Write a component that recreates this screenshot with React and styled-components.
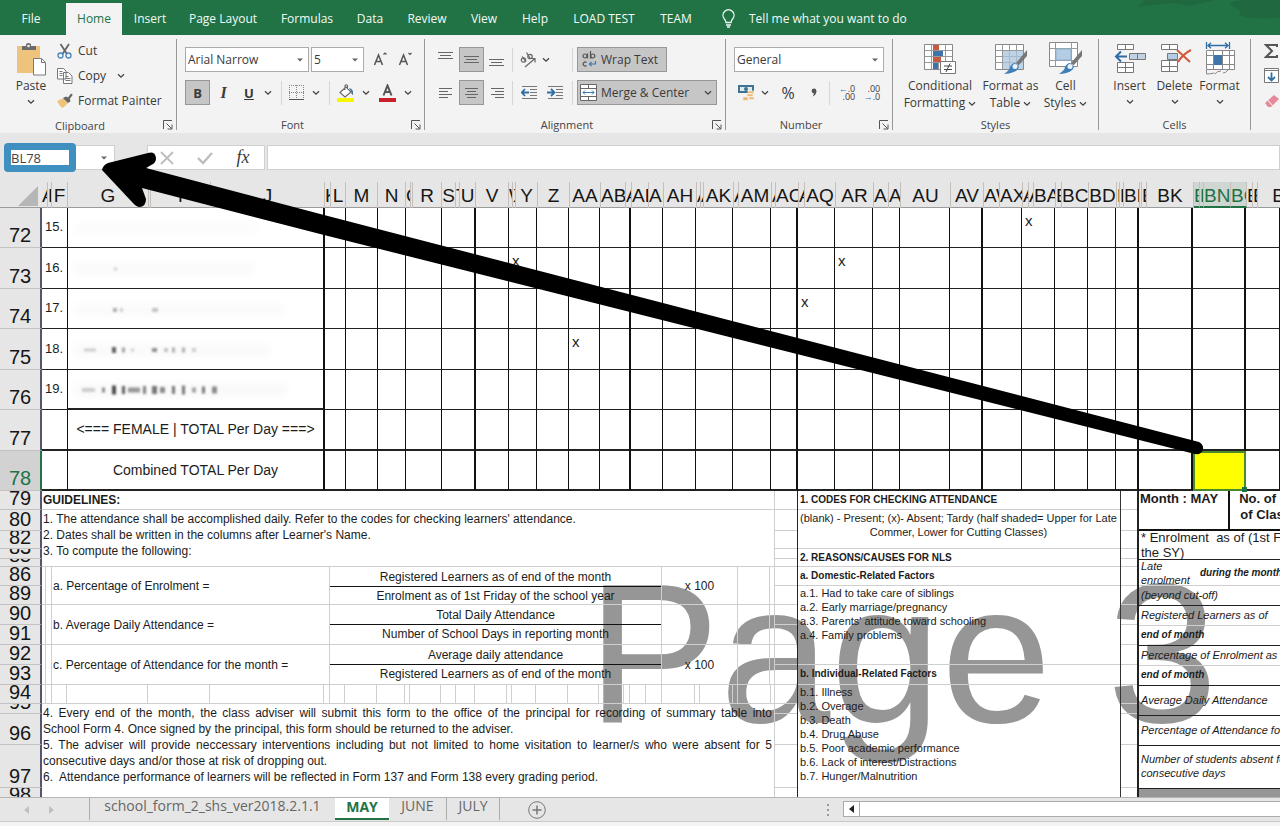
import React from "react";
import styled, { createGlobalStyle, css } from "styled-components";

const UI = '"Open Sans", "Noto Sans", sans-serif';
const SHEET = '"Liberation Sans", Arial, sans-serif';
const GREEN = "#217346";
const GRID = "#cfcfcf";

const Global = createGlobalStyle`
  * { box-sizing: border-box; }
  body { margin: 0; font-family: ${UI}; font-size: 12px; color: #3a3a3a; background: #f3f3f3; }
  button, select, input { font: inherit; color: inherit; }
  p { margin: 0; }
`;

const Page = styled.div`
  position: relative;
  min-height: 100vh;
  width: 100%;
  overflow: hidden;
  display: flex;
  flex-direction: column;
`;

/* ---------- Tab bar ---------- */
const TabBar = styled.nav`
  position: relative;
  display: flex;
  align-items: flex-end;
  height: 35px;
  background: ${GREEN};
`;
const TabButton = styled.button`
  flex: none;
  width: ${(p) => p.$w}px;
  height: 32px;
  margin-right: ${(p) => p.$gap || 0}px;
  padding: 0 0 2px;
  border: 0;
  white-space: nowrap;
  background: ${(p) => (p.$on ? "#f3f3f3" : "transparent")};
  color: ${(p) => (p.$on ? GREEN : "#f4faf6")};
`;
const TellMe = styled.button`
  display: flex;
  align-items: center;
  gap: 13px;
  height: 32px;
  padding: 0 0 2px 15px;
  border: 0;
  white-space: nowrap;
  background: transparent;
  color: #f4faf6;
`;
const Swirl = styled.svg`
  position: absolute;
  top: 0;
  right: 0;
`;

/* ---------- Ribbon ---------- */
const Ribbon = styled.div`
  display: flex;
  height: 98px;
  background: #f3f3f3;
`;
const GroupBox = styled.section`
  display: flex;
  flex-direction: column;
  flex: ${(p) => (p.$w ? "none" : "1 0 30px")};
  width: ${(p) => (p.$w ? p.$w + "px" : "auto")};
  overflow: hidden;
  border-right: ${(p) => (p.$w ? "1px" : "0")} solid #979797;
  border-image: linear-gradient(transparent 5%, #979797 5%, #979797 96%, transparent 96%) 1;
`;
const GroupBody = styled.div`
  flex: 1;
  display: flex;
  flex-direction: ${(p) => (p.$col ? "column" : "row")};
  gap: ${(p) => p.$gap || 0}px;
  padding: ${(p) => p.$pad || "0"};
`;
const GroupLabel = styled.div`
  display: flex;
  align-items: center;
  height: 17px;
  font-size: 11px;
  color: #444;
  span { flex: 1; text-align: center; }
`;
const Launcher = styled.button`
  width: 16px;
  height: 14px;
  padding: 0;
  border: 0;
  background: transparent;
  svg { display: block; margin: 1px auto; }
`;
const BigButton = styled.button`
  display: flex;
  flex-direction: column;
  align-items: center;
  width: ${(p) => p.$w}px;
  height: 74px;
  margin-top: ${(p) => p.$top || 0}px;
  padding: 0;
  border: 0;
  background: transparent;
  line-height: 17px;
  white-space: nowrap;
  > svg { flex: none; margin-bottom: 1px; }
  > svg:last-child { margin-top: 5px; }
`;
const SmallStack = styled.div`
  display: flex;
  flex-direction: column;
  align-items: flex-start;
`;
const SmallButton = styled.button`
  display: flex;
  align-items: center;
  gap: 5px;
  height: 25px;
  padding: 0;
  border: 0;
  background: transparent;
  white-space: nowrap;
`;
const ToolRow = styled.div`
  display: flex;
  align-items: center;
  height: 25px;
`;
const Tool = styled.button`
  flex: none;
  display: flex;
  align-items: center;
  justify-content: center;
  width: ${(p) => p.$w}px;
  height: 100%;
  padding: 0;
  border: 1px solid ${(p) => (p.$on ? "#979797" : "transparent")};
  background: ${(p) => (p.$on ? "#c6c6c6" : "transparent")};
  font-size: ${(p) => p.$fs || 12}px;
  font-weight: ${(p) => (p.$bold ? 700 : 400)};
  font-style: ${(p) => (p.$italic ? "italic" : "normal")};
  text-decoration: ${(p) => (p.$under ? "underline" : "none")};
  font-family: ${(p) => (p.$serif ? '"Liberation Serif", serif' : UI)};
`;
const WideTool = styled(Tool)`
  justify-content: flex-start;
  gap: 4px;
  padding-left: ${(p) => p.$pl || 4}px;
  white-space: nowrap;
`;
const Rule = styled.span`
  flex: none;
  width: 1px;
  height: 24px;
  margin: ${(p) => p.$m};
  background: #d6d6d6;
`;
const Combo = styled.label`
  position: relative;
  flex: none;
  display: flex;
  align-items: center;
  width: ${(p) => p.$w}px;
  height: 25px;
  margin-right: ${(p) => p.$mr || 0}px;
  border: 1px solid #ababab;
  background: #fff;
  select {
    appearance: none;
    width: 100%;
    height: 100%;
    padding: 0 2px;
    border: 0;
    background: transparent;
  }
  svg { position: absolute; right: 5px; pointer-events: none; }
`;

/* ---------- Formula bar ---------- */
const FormulaBar = styled.div`
  display: flex;
  height: 49px;
  padding: 12px 0;
  background: #e6e6e6;
`;
const NameBox = styled.label`
  position: relative;
  display: flex;
  align-items: center;
  width: 111px;
  margin-left: 4px;
  margin-right: 32px;
  border: 1px solid #cfcfcf;
  background: #fff;
  > svg { position: absolute; right: 7px; }
`;
const NameInput = styled.input`
  position: absolute;
  left: -1px;
  top: -3px;
  width: 72px;
  height: 29px;
  border: 7px solid #3f90c0;
  border-radius: 4px;
  padding: 0;
  background: #fff;
  font-size: 13px;
  color: #444;
`;
const FxButtons = styled.div`
  display: flex;
  align-items: center;
  width: 118px;
  margin-right: 2px;
  border: 1px solid #cfcfcf;
  background: #fff;
`;
const FormulaInput = styled.input`
  flex: 1;
  min-width: 0;
  border: 1px solid #cfcfcf;
  background: #fff;
`;

/* ---------- Sheet ---------- */
const Sheet = styled.main`
  position: relative;
  isolation: isolate;
  background: #fff;
  font-family: ${SHEET};
  color: #1c1c1c;
  overflow: hidden;
`;
const ColumnHeads = styled.div`
  display: flex;
  height: 26px;
  background: #e6e6e6;
  border-bottom: 1px solid #9b9b9b;
  color: #161616;
`;
const Corner = styled.div`
  flex: none;
  width: 42px;
  padding: 4px 0 0 18px;
`;
const ColumnHead = styled.div`
  flex: ${(p) => (p.$w ? "none" : "1 0 56px")};
  width: ${(p) => (p.$w ? p.$w + "px" : "auto")};
  height: 26px;
  overflow: hidden;
  border-right: 1px solid #c4bfba;
  text-align: center;
  white-space: nowrap;
  font-size: 19px;
  line-height: 27px;
  ${(p) =>
    p.$on &&
    css`
      background: #d0d6d2;
      color: ${GREEN};
      border-bottom: 2px solid ${GREEN};
    `}
`;
const rowHead = css`
  background: ${(p) => (p.$on ? "#d2d2d2" : "#e6e6e6")};
  color: ${(p) => (p.$on ? GREEN : "#161616")};
  border-right: 2px solid ${(p) => (p.$on ? GREEN : "#55566e")};
  border-bottom: 1px solid #c2c2c2;
  font-size: 20px;
  font-weight: 400;
  line-height: 22px;
`;
const Attendance = styled.table`
  width: 100%;
  table-layout: fixed;
  border-spacing: 0;
`;
const RowTh = styled.th`
  ${rowHead}
  padding: 0 0 1px;
  vertical-align: bottom;
  text-align: center;
`;
const Cell = styled.td`
  height: ${(p) => p.$h}px;
  padding: ${(p) => (p.$mark ? "4px 0 0 3px" : "0")};
  vertical-align: ${(p) => (p.$mark ? "top" : "middle")};
  text-align: ${(p) => (p.$center ? "center" : "left")};
  font-size: ${(p) => (p.$mark ? 15 : 14)}px;
  line-height: 17px;
  white-space: nowrap;
  border-right: ${(p) => (p.$thick ? 2 : 1)}px solid #111;
  border-bottom: ${(p) => (p.$heavy ? 2 : 1)}px solid #222;
`;
const NoCell = styled(Cell)`
  font-size: 13px;
  padding: 0 0 2px 3px;
`;
const NameCell = styled(Cell)`
  > svg { display: block; }
`;
const ActiveCell = styled(Cell)`
  position: relative;
  background: #ff0;
  border: 2px solid #4b8a2a;
  &::after {
    content: "";
    position: absolute;
    right: -3px;
    bottom: -3px;
    width: 5px;
    height: 5px;
    background: ${GREEN};
  }
`;

const Lower = styled.div`
  position: relative;
  display: flex;
  height: 306px;
  overflow: hidden;
`;
const Watermark = styled.div`
  position: absolute;
  z-index: -1;
  left: 587px;
  top: 52px;
  font-size: 199px;
  line-height: 220px;
  white-space: nowrap;
  color: #969696;
`;
const RowHeads = styled.div`
  flex: none;
  width: 42px;
`;
const RowHead = styled.div`
  ${rowHead}
  display: flex;
  align-items: flex-end;
  justify-content: center;
  height: ${(p) => p.$h}px;
  overflow: hidden;
`;
const Guidelines = styled.section`
  flex: none;
  width: 733px;
  border-right: 1px solid ${GRID};
  font-size: 12px;
  line-height: 16px;
`;
const Band = styled.div`
  display: flex;
  height: ${(p) => p.$h}px;
  border-bottom: 1px solid ${GRID};
`;
const Lines = styled.div`
  width: 100%;
  padding: ${(p) => p.$pad || "1px 2px 0 1px"};
  text-align: ${(p) => p.$align || "left"};
  font-weight: ${(p) => (p.$bold ? 700 : 400)};
`;
const FullLine = styled.span`
  display: block;
  text-align-last: justify;
`;
const Nub = styled.span`
  flex: none;
  width: ${(p) => p.$w}px;
  border-right: 1px solid ${GRID};
`;
const FormulaName = styled.div`
  display: flex;
  align-items: center;
  width: 278px;
  padding-left: 1px;
  border-right: 1px solid ${GRID};
`;
const Fraction = styled.div`
  width: 332px;
  text-align: center;
  border-right: 1px solid ${GRID};
  p:first-child { height: 20px; padding-top: 2px; border-bottom: 1px solid #111; }
  p:last-child { padding-top: 1px; }
`;
const Times = styled.div`
  display: flex;
  align-items: center;
  justify-content: center;
  width: 76px;
  border-right: 1px solid ${GRID};
`;
const Strip = styled.div`
  flex: none;
  width: ${(p) => p.$w}px;
  border-right: ${(p) => p.$b}px solid #222;
`;
const Codes = styled.section`
  flex: none;
  width: 323px;
  border-right: 1px solid #333;
  font-size: 11px;
  line-height: 14px;
  white-space: nowrap;
`;
const CodeTitle = styled.div`
  width: 100%;
  padding: 2px 0 0 2px;
  font-size: 10px;
  font-weight: 700;
`;
const Summary = styled.section`
  flex: 1 0 142px;
  overflow: hidden;
  font-size: 11px;
  line-height: 14px;
  font-style: italic;
  white-space: nowrap;
`;
const MonthRow = styled.div`
  display: flex;
  height: 40px;
  border-bottom: 2px solid #111;
  font-size: 13px;
  font-weight: 700;
  font-style: normal;
  line-height: 16px;
`;
const MonthCell = styled.div`
  flex: none;
  width: ${(p) => p.$w}px;
  padding: 0 1px;
  text-align: ${(p) => p.$align || "left"};
  border-right: 2px solid #111;
`;
const SumRow = styled.div`
  display: flex;
  flex-direction: column;
  justify-content: center;
  height: ${(p) => p.$h}px;
  padding: 0 0 2px 2px;
  border-bottom: 1px solid ${(p) => (p.$soft ? GRID : "#222")};
  font-size: ${(p) => (p.$bold ? 10 : 11)}px;
  font-weight: ${(p) => (p.$bold ? 700 : 400)};
`;
const Enrolment = styled(SumRow)`
  padding-bottom: 0;
  font-size: 13px;
  font-style: normal;
  line-height: 15px;
`;
const LateRow = styled(SumRow)`
  flex-direction: row;
  justify-content: flex-start;
  align-items: center;
  gap: 10px;
  padding-bottom: 0;
  b { font-size: 10px; }
`;
const Filled = styled.div`
  height: 20px;
  background: #969696;
`;

/* ---------- Sheet tabs ---------- */
const SheetBar = styled.footer`
  display: flex;
  height: 25px;
  padding-left: 15px;
  background: #e6e6e6;
  border-top: 1px solid #b5b5b5;
  border-bottom: 1px solid #c9c9c9;
  font-size: 14px;
  color: #666;
`;
const SheetTab = styled.button`
  flex: none;
  width: ${(p) => p.$w}px;
  height: 22px;
  padding: 0 0 ${(p) => (p.$on ? 4 : 7)}px;
  border: 0;
  border-right: ${(p) => (p.$sep ? 1 : 0)}px solid #ababab;
  background: ${(p) => (p.$on ? "#fff" : "transparent")};
  color: ${(p) => (p.$on ? GREEN : "inherit")};
  font-weight: ${(p) => (p.$on ? 700 : 400)};
  border-bottom: ${(p) => (p.$on ? 2 : 0)}px solid ${GREEN};
  line-height: 15px;
`;
const IconButton = styled.button`
  flex: none;
  display: flex;
  align-items: center;
  justify-content: center;
  width: ${(p) => p.$w}px;
  padding: 0;
  border: 0;
  background: transparent;
  color: inherit;
`;
const Splitter = styled.div`
  flex: none;
  display: flex;
  align-items: center;
  justify-content: flex-end;
  width: 257px;
`;
const Scroller = styled.div`
  flex: 1;
  display: flex;
  height: 16px;
  margin: 3px 0 0 12px;
  border: 1px solid #ababab;
  border-right: 0;
  background: #fff;
`;
const ScrollArrow = styled(IconButton)`
  border-right: 1px solid #ababab;
`;
const Spacer = styled.span`
  flex: 1;
`;
const Annotation = styled.svg`
  position: absolute;
  left: 0;
  top: 0;
  pointer-events: none;
`;

/* ---------- Icons ---------- */
const Caret = () => (
  <svg width="8" height="6" viewBox="0 0 8 6" fill="none" stroke="#444" strokeWidth="1.3"><path d="M1 1.2 4 4.2 7 1.2" /></svg>
);
const Drop = () => (
  <svg width="6" height="4" viewBox="0 0 6 4"><path d="M0 .5h6L3 3.6z" fill="#666" /></svg>
);
const LaunchIcon = () => (
  <svg width="10" height="10" viewBox="0 0 10 10" fill="none" stroke="#555"><path d="M.5 9V.5H9M3.5 3.5l5 5M9 4.5V9H4.5" /></svg>
);
const PasteIcon = () => (
  <svg width="32" height="33" viewBox="0 0 32 33">
    <path d="M2 3h23v27H2z" fill="#eec47c" />
    <path d="M7 3h4V1.5Q11 0 13.500 0T16 1.500V3h5v4H7z" fill="#6b6b6b" /><circle cx="13.500" cy="3" r="1.300" fill="#f3f3f3" />
    <path d="M18.500 15.500h8l4 4v12.500h-12z" fill="#fff" stroke="#7a7a7a" /><path d="M26.500 15.500v4h4" fill="none" stroke="#7a7a7a" />
  </svg>
);
const CutIcon = () => (
  <svg width="16" height="16" viewBox="0 0 16 16" fill="none"><path d="M3.500 1 10 11M12 1 5.500 11" stroke="#666" strokeWidth="1.800" /><circle cx="3.500" cy="12.500" r="2.500" stroke="#4a84b8" strokeWidth="1.300" /><circle cx="11.500" cy="12.500" r="2.500" stroke="#4a84b8" strokeWidth="1.300" /></svg>
);
const CopyIcon = () => (
  <svg width="16" height="16" viewBox="0 0 16 16" fill="#fff" stroke="#777"><path d="M.5.5h6l2.500 2.500v8h-8.500zM6.500 4.500h5l3.500 3.500v7.500H6.500z" /><path d="M2.500 3.500h3M2.500 5.500h3M2.500 7.500h3M8.500 8.500h3M8.500 10.500h5M8.500 12.500h5" /></svg>
);
const PainterIcon = () => (
  <svg width="16" height="16" viewBox="0 0 16 16"><path d="M0 8l7-3 4 5-5 5q-3-1-6-7z" fill="#eec47c" /><path d="M6 5l3-1.500 2 1 3-4 1.800 1.300-3 4 .7 2.500L11 10z" fill="#666" /></svg>
);
const FontSizeIcon = ({ down }) => (
  <svg width="16" height="16" viewBox="0 0 16 16" fill="none" stroke="#555" strokeWidth="1.500"><path d="M1.500 13 5.500 3 9.500 13M3 9.500h5" /><path d={down ? "M10.500 1l1.500 1.500L13.500 1" : "M10.500 2.500 12 1l1.500 1.500"} strokeWidth="1.200" /></svg>
);
const BordersIcon = () => (
  <svg width="16" height="16" viewBox="0 0 16 16" fill="none" stroke="#888" strokeDasharray="1 1"><path d="M.5 0v15M7.500 0v15M14.500 0v15M0 .5h15M0 7.500h15" /><path d="M0 14.500h15" stroke="#555" strokeDasharray="none" /></svg>
);
const FillIcon = () => (
  <svg width="18" height="18" viewBox="0 0 18 18" fill="none"><path d="M3 8.500 9 3l5 5-6 5zM8 6V1.500q1-1.500 2.500 0V5" stroke="#666" fill="#fff" strokeWidth="1.100" /><path d="M12 4q5 1 4 7-2-1-2-4z" fill="#4a6f92" /><path d="M0 14h17v4H0z" fill="#f6f600" /></svg>
);
const FontColorIcon = () => (
  <svg width="18" height="18" viewBox="0 0 18 18" fill="none"><path d="M4.500 11.500 8.500 1.500 12.500 11.500M6 8h5" stroke="#555" strokeWidth="2" /><path d="M0 14h17v4H0z" fill="#c8202a" /></svg>
);
const LinesIcon = ({ rows }) => (
  <svg width="16" height="16" viewBox="0 0 16 16" stroke="#666"><path d={rows.map(([x, y, w]) => `M${x} ${y}.5h${w}`).join("")} /></svg>
);
const vAlign = (y) => [[0, y, 15], [2, y + 3, 11], [0, y + 6, 15]];
const AngleIcon = () => (
  <svg width="18" height="18" viewBox="0 0 18 18" fill="none" stroke="#666" strokeWidth="1.200"><circle cx="4.500" cy="9" r="2.200" /><path d="M3.200 5.500l3.800 5.500M7.500 1.500l4 6.500" /><circle cx="11" cy="5.500" r="2.200" /><path d="M6 16 16 7.500M12 7.500h4v4" /></svg>
);
const IndentIcon = ({ right }) => (
  <svg width="17" height="16" viewBox="0 0 17 16" fill="none"><path d="M1 1.500h15M9 4.500h7M9 7.500h7M9 10.500h7M1 13.500h15" stroke="#777" /><path d={right ? "M0 7.500h7M4 4l3.500 3.500L4 11" : "M8 7.500H1M4 4 .8 7.500 4 11"} stroke="#2f6ea5" strokeWidth="1.800" /></svg>
);
const WrapIcon = () => (
  <svg width="15" height="17" viewBox="0 0 15 17" fill="none" stroke="#555" strokeWidth="1.200"><circle cx="3" cy="5" r="2" /><path d="M5.500 2.500V7.500M8.500 0v7.500M4.500 11.500a2 2 0 1 0 0 3" /><circle cx="10.800" cy="5" r="2" /><path d="M13.500 10v3H7.500M9.500 11l-2 2 2 2" stroke="#3a78b0" /></svg>
);
const MergeIcon = () => (
  <svg width="17" height="17" viewBox="0 0 17 17" fill="#fff" stroke="#666"><path d="M.5.5h16v16H.5zM.5 4.500h16M.5 12.500h16M8.500.5v4M8.500 12.500v4" /><path d="M3 8.500h11M5 6.500l-2 2 2 2M12 6.500l2 2-2 2" stroke="#3a78b0" fill="none" /></svg>
);
const MoneyIcon = () => (
  <svg width="18" height="18" viewBox="0 0 18 18"><path d="M1 1h16v8H1z" fill="#3f7390" /><path d="M3 3h12v4H3z" fill="#dcebf2" /><circle cx="9" cy="5" r="2" fill="#3f7390" /><path d="M11 7h6v2.500h-6zM10 10h6v2.500h-6zM12 13h5v2.500h-5zM6 13h5v3.500H6z" fill="#eeb86a" stroke="#f3f3f3" strokeWidth=".6" /></svg>
);
const CommaIcon = () => (
  <svg width="6" height="9" viewBox="0 0 6 9"><circle cx="3" cy="3" r="2.400" fill="#555" /><path d="M5.400 3Q5.500 7 1.500 8.500 3.500 6 3 4z" fill="#555" /></svg>
);
const DecimalBox = styled.span`
  font-size: 9px;
  line-height: 8px;
  text-align: right;
  i { color: #3a78b0; font-style: normal; font-weight: 700; }
`;
const GridArt = ({ children }) => (
  <><path d="M1.500 2.500h28v25h-28z" fill="#fff" stroke="#888" /><path d="M1.500 8.500h28M1.500 14.500h28M1.500 20.500h28M8.500 2.500v25M15.500 2.500v25M22.500 2.500v25" stroke="#999" fill="none" />{children}</>
);
const CondIcon = () => (
  <svg width="34" height="34" viewBox="0 0 34 34"><GridArt><path d="M10 3h6v5h-6zM10 15h8v5h-8z" fill="#c75a42" /><path d="M10 9h10v5H10zM10 21h5v6h-5z" fill="#3f74aa" /></GridArt><path d="M17.500 19.500h15v12h-15z" fill="#fff" stroke="#777" /><path d="M21 24h8M21 27.500h8M27 21.500l-4 8.500" stroke="#444" /></svg>
);
const Brush = () => (
  <><path d="M33 8 22 21l2.500 2.500L33 14z" fill="#777" /><path d="M21 21l4 3.500q-1 6.500-15 7.500 6-4 6-7 2-4 5-4z" fill="#3f7fb8" /><circle cx="21" cy="24.500" r="2.500" fill="#eaf3fa" /></>
);
const TableIcon = () => (
  <svg width="34" height="34" viewBox="0 0 34 34"><GridArt><path d="M9 9h20v18H9z" fill="#a8c4de" opacity=".75" /></GridArt><Brush /></svg>
);
const CellStyleIcon = () => (
  <svg width="34" height="34" viewBox="0 0 34 34"><path d="M.5.500h28v24h-28z" fill="#fff" stroke="#888" /><path d="M.5 6.500h28M.5 18.500h28M6.500.5v24M22.500.5v24" stroke="#999" /><path d="M7 7h15v11H7z" fill="#b4cde4" stroke="#8fb0cf" /><Brush /></svg>
);
const InsertIcon = () => (
  <svg width="34" height="34" viewBox="0 0 34 34" fill="#fff" stroke="#777"><path d="M4.500 2.500h16v5h-16zM12.500 2.500v5M4.500 20.500h16v10h-16zM4.500 25.500h16M12.500 20.500v10" /><path d="M16.500 11.500h16v6h-16zM24.500 11.500v6" fill="#c2d2e2" /><path d="M14 14.500H3M8 9.500l-5 5 5 5" fill="none" stroke="#2f6ea5" strokeWidth="2" /></svg>
);
const DeleteIcon = () => (
  <svg width="34" height="34" viewBox="0 0 34 34" fill="#fff" stroke="#777"><path d="M3.500 2.500h16v5h-16zM11.500 2.500v5M3.500 18.500h16v11h-16zM3.500 24.500h16M11.500 18.500v11" /><path d="M9.500 11.500h10v6h-10z" fill="#b4cde4" /><path d="M19 8l13 12M33 8Q25 12 20 20" fill="none" stroke="#d2573d" strokeWidth="2" /></svg>
);
const FormatIcon = () => (
  <svg width="34" height="34" viewBox="0 0 34 34" fill="none" stroke="#888"><path d="M3.500 8.500h28v19h-28z" fill="#fff" /><path d="M3.500 13.500h28M3.500 22.500h28M10.500 8.500v19M19.500 8.500v19M26.500 8.500v19M3.500 28v4q3 0 8-1M12 32q2-3 6-3M20 31q3 0 5-3" /><path d="M11 13h8v10h-8z" fill="#3f74aa" stroke="none" /><path d="M3.500 0v7M26.500 0v7M5 3.500h20M8 .8 5 3.500 8 6.300M22 .8l3 2.700-3 2.800" stroke="#2f6ea5" strokeWidth="1.300" /></svg>
);
const SigmaIcon = () => (
  <svg width="15" height="16" viewBox="0 0 15 16" fill="none" stroke="#555" strokeWidth="2"><path d="M13 4V2H2l6 6-6 6h11v-2" /></svg>
);
const FillDownIcon = () => (
  <svg width="16" height="16" viewBox="0 0 16 16" fill="none"><path d="M.5.5h14v14H.5z" fill="#fff" stroke="#777" /><path d="M1 2.500h13" stroke="#777" /><path d="M7.500 4.500v8M4 9l3.500 3.500L11 9" stroke="#2f6ea5" strokeWidth="1.800" /></svg>
);
const EraserIcon = () => (
  <svg width="16" height="16" viewBox="0 0 16 16"><path d="M1 10 10 2l5 4-8 8H4z" fill="#e58a99" /><path d="M4 7.500l4.500 5" stroke="#fff" /></svg>
);
const BulbIcon = () => (
  <svg width="15" height="19" viewBox="0 0 15 19" fill="none" stroke="#f4faf6" strokeWidth="1.300"><path d="M5 13.500q0-2-1.800-3.800A5.500 5.500 0 1 1 11.800 9.700Q10 11.500 10 13.500zM5 16h5M6 18h3" /></svg>
);

/* ---------- Data ---------- */
const TABS = [
  ["File", 62, 4], ["Home", 56], ["Insert", 56], ["Page Layout", 90], ["Formulas", 78], ["Data", 48],
  ["Review", 66], ["View", 48], ["Help", 54], ["LOAD TEST", 84], ["TEAM", 60],
];
const COLUMNS = [
  ["A", 6], ["E", 4], ["F", 16], ["G", 81], ["H", 2], ["I", 60], ["J", 114], ["K", 6], ["L", 15], ["M", 32], ["N", 28],
  ["O", 5], ["P", 2], ["R", 29], ["S", 14], ["T", 4], ["U", 16], ["V", 33], ["W", 4], ["X", 3], ["Y", 22], ["Z", 32], ["AA", 31],
  ["AB", 25], ["AC", 6], ["AE", 17], ["AF", 15], ["AH", 33], ["AI", 4], ["AJ", 3], ["AK", 30], ["AL", 5], ["AM", 33], ["AN", 4],
  ["AO", 23], ["AP", 6], ["AQ", 31], ["AR", 38], ["AS", 15], ["AT", 12], ["AU", 50], ["AV", 33], ["AW", 16], ["AX", 23],
  ["AY", 6], ["AZ", 5], ["BA", 22], ["BB", 6], ["BC", 27], ["BD", 28], ["BE", 3], ["BF", 4], ["BH", 16], ["BI", 2], ["BJ", 5],
  ["BK", 47], ["BL", 6, 1], ["BM", 4, 1], ["BN", 27, 1], ["BO", 16, 1], ["BP", 6], ["BQ", 5], ["BR", 0],
];
/* Day columns: width, and whether the right edge closes a week */
const DAYS = [
  [21], [32], [28], [36], [34, 1], [33], [28], [32], [31], [31, 1], [32], [33], [37], [38], [27, 1], [37], [38], [27], [50],
  [33, 1], [39], [33], [33], [28], [23, 1], [54, 1], [53, 1], [0],
];
const ACTIVE_DAY = 26;
const ROWS = [
  { n: 72, h: 40, no: "15.", marks: [21] },
  { n: 73, h: 41, no: "16.", marks: [6, 16] },
  { n: 74, h: 40, no: "17.", marks: [15] },
  { n: 75, h: 41, no: "18.", marks: [8] },
  { n: 76, h: 40, no: "19.", marks: [] },
  { n: 77, h: 41, label: "<=== FEMALE | TOTAL Per Day ===>", marks: [] },
  { n: 78, h: 40, label: "Combined TOTAL Per Day", marks: [] },
];
/* Blurred learner names: x, height, opacity, width of each trace */
const SMUDGE = {
  72: [[6, 12, 0.012, 185]],
  73: [[6, 12, 0.018, 180], [46, 3, 0.2, 3]],
  74: [[6, 12, 0.018, 210], [45, 4, 0.35, 4], [52, 4, 0.2, 3], [84, 4, 0.25, 6]],
  75: [[6, 12, 0.022, 195], [16, 3, 0.2, 12], [44, 6, 0.7, 4], [54, 5, 0.4, 3], [63, 3, 0.2, 3], [84, 4, 0.5, 5], [96, 4, 0.25, 4], [104, 5, 0.35, 3], [114, 5, 0.35, 3], [124, 4, 0.2, 4]],
  76: [[6, 14, 0.025, 213], [14, 4, 0.2, 13], [34, 5, 0.5, 3], [44, 9, 0.8, 4], [54, 8, 0.7, 3], [60, 5, 0.45, 12], [75, 8, 0.55, 3], [84, 8, 0.6, 5], [92, 6, 0.5, 5], [104, 8, 0.6, 3], [114, 9, 0.6, 3], [124, 5, 0.4, 4], [134, 7, 0.6, 3], [144, 7, 0.5, 5]],
};
const HEADS = [
  ["79", 19], ["80", 21], ["82", 18], ["83", 10], ["85", 8], ["86", 19], ["89", 19], ["90", 20], ["91", 20], ["92", 20],
  ["93", 20], ["94", 19], ["95", 10], ["96", 31], ["97", 43], ["98", 18],
];
const FORMULAS = [
  ["a. Percentage of Enrolment =", "Registered Learners as of end of the month", "Enrolment as of 1st Friday of the school year", "x 100", 38],
  ["b. Average Daily Attendance =", "Total Daily Attendance", "Number of School Days in reporting month", "", 40],
  ["c. Percentage of Attendance for the month =", "Average daily attendance", "Registered Learners as of end of the month", "x 100", 40],
];
const TICKS = [4, 6, 15, 81, 62, 114, 6, 15, 32, 28, 5, 31, 15, 19, 32, 5, 24, 32, 31, 25, 6, 16, 16, 33, 5, 33, 5, 33];
const REASONS_A = ["a.1. Had to take care of siblings", "a.2. Early marriage/pregnancy", "a.3. Parents' attitude toward schooling", "a.4. Family problems"];
const REASONS_B = ["b.1. Illness", "b.2. Overage", "b.3. Death", "b.4. Drug Abuse", "b.5. Poor academic performance", "b.6. Lack of interest/Distractions", "b.7. Hunger/Malnutrition"];

/* ---------- Parts ---------- */
const Group = ({ name, w, launch, children, pad, col, gap }) => (
  <GroupBox $w={w} aria-label={name || "Editing"}>
    <GroupBody $pad={pad} $col={col} $gap={gap}>{children}</GroupBody>
    <GroupLabel><span>{name}</span>{launch && <Launcher aria-label={`${name} settings`}><LaunchIcon /></Launcher>}</GroupLabel>
  </GroupBox>
);
const Choice = ({ label, value, ...rest }) => (
  <Combo {...rest}><select aria-label={label} defaultValue={value}><option>{value}</option></select><Drop /></Combo>
);
const CaretTool = ({ w, label }) => <Tool $w={w} aria-label={label}><Caret /></Tool>;
const Smudge = ({ marks }) => (
  <svg width="250" height="28" viewBox="0 0 250 28" aria-hidden="true">
    {marks.map(([x, h, o, w], i) => (
      <rect key={i} x={x} y={15 - h / 2} width={w} height={h} fill="#222" opacity={o} style={{ filter: `blur(${w > 100 ? 4 : 1}px)` }} />
    ))}
  </svg>
);

const RibbonView = () => (
  <Ribbon>
    <Group name="Clipboard" w={177} launch pad="3px 0 0 15px" gap={10}>
      <BigButton $w={32} $top={5}><PasteIcon />Paste<Caret /></BigButton>
      <SmallStack>
        <SmallButton><CutIcon />Cut</SmallButton>
        <SmallButton><CopyIcon />Copy&nbsp;&nbsp;<Caret /></SmallButton>
        <SmallButton><PainterIcon />Format Painter</SmallButton>
      </SmallStack>
    </Group>
    <Group name="Font" w={248} launch pad="12px 0 0 8px" col gap={8}>
      <ToolRow>
        <Choice label="Font name" value="Arial Narrow" $w={124} $mr={2} />
        <Choice label="Font size" value="5" $w={53} $mr={4} />
        <Tool $w={25} aria-label="Increase font size"><FontSizeIcon /></Tool>
        <Tool $w={25} aria-label="Decrease font size"><FontSizeIcon down /></Tool>
      </ToolRow>
      <ToolRow>
        <Tool $w={25} $on $bold $fs={13}>B</Tool>
        <Tool $w={27} $bold $italic $serif $fs={16}>I</Tool>
        <Tool $w={24} $bold $under $fs={13}>U</Tool>
        <CaretTool w={14} label="Underline styles" />
        <Rule $m="0 5px 0 6px" />
        <Tool $w={20} aria-label="Borders"><BordersIcon /></Tool>
        <CaretTool w={18} label="Border styles" />
        <Rule $m="0 5px 0 4px" />
        <Tool $w={22} aria-label="Fill colour"><FillIcon /></Tool>
        <CaretTool w={18} label="Fill colours" />
        <Tool $w={26} aria-label="Font colour"><FontColorIcon /></Tool>
        <CaretTool w={14} label="Font colours" />
      </ToolRow>
    </Group>
    <Group name="Alignment" w={301} launch pad="12px 0 0 8px" col gap={8}>
      <ToolRow>
        <Tool $w={26} aria-label="Top align"><LinesIcon rows={vAlign(0)} /></Tool>
        <Tool $w={25} $on aria-label="Middle align"><LinesIcon rows={vAlign(4)} /></Tool>
        <Tool $w={26} aria-label="Bottom align"><LinesIcon rows={vAlign(7)} /></Tool>
        <Rule $m="0 3px 0 2px" />
        <Tool $w={24} aria-label="Orientation"><AngleIcon /></Tool>
        <CaretTool w={12} label="Orientation options" />
        <Rule $m="0 4px 0 20px" />
        <WideTool $w={90} $on><WrapIcon />Wrap Text</WideTool>
      </ToolRow>
      <ToolRow>
        <Tool $w={26} aria-label="Align left"><LinesIcon rows={[[1, 3, 13], [1, 6, 9], [1, 9, 13], [1, 12, 9]]} /></Tool>
        <Tool $w={25} $on aria-label="Centre"><LinesIcon rows={[[1, 3, 13], [3, 6, 9], [1, 9, 13], [3, 12, 9]]} /></Tool>
        <Tool $w={26} aria-label="Align right"><LinesIcon rows={[[2, 3, 13], [6, 6, 9], [2, 9, 13], [6, 12, 9]]} /></Tool>
        <Rule $m="0 3px 0 2px" />
        <Tool $w={26} aria-label="Decrease indent"><IndentIcon /></Tool>
        <Tool $w={26} aria-label="Increase indent"><IndentIcon right /></Tool>
        <Rule $m="0 4px" />
        <WideTool $w={140} $on $pl={2}><MergeIcon />Merge &amp; Center<Spacer /><Caret /><span /></WideTool>
      </ToolRow>
    </Group>
    <Group name="Number" w={167} launch pad="12px 0 0 8px" col gap={8}>
      <ToolRow><Choice label="Number format" value="General" $w={150} /></ToolRow>
      <ToolRow>
        <Tool $w={24} aria-label="Accounting format"><MoneyIcon /></Tool>
        <CaretTool w={14} label="Accounting formats" />
        <Tool $w={32} $fs={16}>%</Tool>
        <Tool $w={20} aria-label="Comma style"><CommaIcon /></Tool>
        <Rule $m="0 6px 0 5px" />
        <Tool $w={22} aria-label="Increase decimal"><DecimalBox><i>←</i>.0<br />.00</DecimalBox></Tool>
        <Tool $w={28} aria-label="Decrease decimal"><DecimalBox>.00<br /><i>→</i>.0</DecimalBox></Tool>
      </ToolRow>
    </Group>
    <Group name="Styles" w={206} pad="7px 0 0 5px">
      <BigButton $w={84}><CondIcon /><span>Conditional</span><span>Formatting <Caret /></span></BigButton>
      <BigButton $w={57}><TableIcon /><span>Format as</span><span>Table <Caret /></span></BigButton>
      <BigButton $w={53}><CellStyleIcon /><span>Cell</span><span>Styles <Caret /></span></BigButton>
    </Group>
    <Group name="Cells" w={152} pad="7px 0 0 8px">
      <BigButton $w={45}><InsertIcon />Insert<Caret /></BigButton>
      <BigButton $w={45}><DeleteIcon />Delete<Caret /></BigButton>
      <BigButton $w={45}><FormatIcon />Format<Caret /></BigButton>
    </Group>
    <Group name="" pad="3px 0 0 13px">
      <SmallStack>
        <SmallButton aria-label="AutoSum"><SigmaIcon /></SmallButton>
        <SmallButton aria-label="Fill"><FillDownIcon /></SmallButton>
        <SmallButton aria-label="Clear"><EraserIcon /></SmallButton>
      </SmallStack>
    </Group>
  </Ribbon>
);

const AttendanceRow = ({ row }) => {
  const heavy = row.n >= 77;
  return (
    <tr>
      <RowTh scope="row" $on={row.n === 78}>{row.n}</RowTh>
      <NoCell $h={row.h} $heavy={heavy}>{row.no}</NoCell>
      <NameCell $h={row.h} $thick $heavy={heavy || row.n === 76} $center={!!row.label}>
        {row.label || <Smudge marks={SMUDGE[row.n]} />}
      </NameCell>
      {DAYS.map(([, thick], i) =>
        row.n === 78 && i === ACTIVE_DAY
          ? <ActiveCell key={i} $h={row.h} />
          : <Cell key={i} $h={row.h} $thick={thick} $heavy={heavy} $mark>{row.marks.includes(i) ? "x" : ""}</Cell>
      )}
    </tr>
  );
};
const AttendanceView = () => (
  <Attendance>
    <colgroup>
      <col width="42" /><col width="26" /><col width="257" />
      {DAYS.map(([w], i) => <col key={i} width={w || undefined} />)}
    </colgroup>
    <tbody>{ROWS.map((r) => <AttendanceRow key={r.n} row={r} />)}</tbody>
  </Attendance>
);

const GuidelinesView = () => (
  <Guidelines>
    <Band $h={19}><Lines $bold>GUIDELINES:</Lines></Band>
    <Band $h={57}>
      <Lines>
        <p>1. The attendance shall be accomplished daily. Refer to the codes for checking learners' attendance.</p>
        <p>2. Dates shall be written in the columns after Learner's Name.</p>
        <p>3. To compute the following:</p>
      </Lines>
    </Band>
    {FORMULAS.map(([name, top, bottom, times, h]) => (
      <Band $h={h} key={name}>
        <Nub $w={4} /><Nub $w={6} />
        <FormulaName>{name}</FormulaName>
        <Fraction><p>{top}</p><p>{bottom}</p></Fraction>
        <Times>{times}</Times>
        <Nub $w={32} />
      </Band>
    ))}
    <Band $h={19}>{TICKS.map((w, i) => <Nub key={i} $w={w} />)}</Band>
    <Lines $align="justify">
      <p>
        <FullLine>4. Every end of the month, the class adviser will submit this form to the office of the principal for recording of summary table into</FullLine>
        School Form 4. Once signed by the principal, this form should be returned to the adviser.
      </p>
      <p>5. The adviser will provide neccessary interventions including but not limited to home visitation to learner/s who were absent for 5 consecutive days and/or those at risk of dropping out.</p>
      <p>6.&nbsp; Attendance performance of learners will be reflected in Form 137 and Form 138 every grading period.</p>
    </Lines>
  </Guidelines>
);

const CodesView = () => (
  <Codes>
    <Band $h={19}><CodeTitle>1. CODES FOR CHECKING ATTENDANCE</CodeTitle></Band>
    <Band $h={39}><Lines $align="center">(blank) - Present; (x)- Absent; Tardy (half shaded= Upper for Late<br />Commer, Lower for Cutting Classes)</Lines></Band>
    <Band $h={18}><CodeTitle>2. REASONS/CAUSES FOR NLS</CodeTitle></Band>
    <Band $h={19}><CodeTitle>a. Domestic-Related Factors</CodeTitle></Band>
    <Band $h={79}><Lines $pad="0 0 0 2px">{REASONS_A.map((t) => <p key={t}>{t}</p>)}</Lines></Band>
    <Band $h={20}><CodeTitle>b. Individual-Related Factors</CodeTitle></Band>
    <Lines $pad="0 0 0 2px">{REASONS_B.map((t) => <p key={t}>{t}</p>)}</Lines>
  </Codes>
);

const SummaryView = () => (
  <Summary>
    <MonthRow><MonthCell $w={91}>Month : MAY</MonthCell><MonthCell $w={92} $align="center">No. of Days<br />of Classes:</MonthCell></MonthRow>
    <Enrolment $h={29}><p>* Enrolment&nbsp; as of (1st Friday of</p><p>the SY)</p></Enrolment>
    <LateRow $h={26} $soft><p>Late<br />enrolment</p><b>during the month</b></LateRow>
    <SumRow $h={20}>(beyond cut-off)</SumRow>
    <SumRow $h={20} $soft>Registered Learners as of</SumRow>
    <SumRow $h={20} $bold>end of month</SumRow>
    <SumRow $h={20} $soft>Percentage of Enrolment as of</SumRow>
    <SumRow $h={20} $bold>end of month</SumRow>
    <SumRow $h={30}>Average Daily Attendance</SumRow>
    <SumRow $h={30}>Percentage of Attendance for the month</SumRow>
    <SumRow $h={43}><p>Number of students absent for 5</p><p>consecutive days</p></SumRow>
    <Filled />
  </Summary>
);

const StripView = ({ w, b }) => (
  <Strip $w={w} $b={b}>{HEADS.map(([n, h]) => <Band key={n} $h={h} />)}</Strip>
);

export default function App() {
  return (
    <Page>
      <Global />
      <TabBar>
        {TABS.map(([t, w, gap]) => <TabButton key={t} $w={w} $gap={gap} $on={t === "Home"}>{t}</TabButton>)}
        <TellMe><BulbIcon />Tell me what you want to do</TellMe>
        <Swirl width="150" height="22" viewBox="0 0 150 22" fill="#1e603c"><path d="M8 7 14 0h70L60 6 44 3 20 5zM100 3q6-3 20-3h30v18q-26 2-42-3 6-3 0-6-6-2-8-6z" opacity=".6" /></Swirl>
      </TabBar>
      <RibbonView />
      <FormulaBar>
        <NameBox><NameInput aria-label="Name box" defaultValue="BL78" /><Drop /></NameBox>
        <FxButtons>
          <IconButton $w={38} aria-label="Cancel"><svg width="14" height="14" viewBox="0 0 14 14" stroke="#bdbdbd" strokeWidth="1.800"><path d="M1 1l12 12M13 1 1 13" /></svg></IconButton>
          <IconButton $w={38} aria-label="Enter"><svg width="16" height="14" viewBox="0 0 16 14" fill="none" stroke="#bdbdbd" strokeWidth="2.400"><path d="M1 7l5 5L15 2" /></svg></IconButton>
          <Tool $w={38} $serif $italic $fs={18} aria-label="Insert function">fx</Tool>
        </FxButtons>
        <FormulaInput aria-label="Formula" />
      </FormulaBar>
      <Sheet>
        <ColumnHeads>
          <Corner><svg width="21" height="20" viewBox="0 0 21 20"><path d="M0 20h20V0z" fill="#b6b6b6" /></svg></Corner>
          {COLUMNS.map(([t, w, on]) => <ColumnHead key={t} $w={w} $on={on}>{t}</ColumnHead>)}
        </ColumnHeads>
        <AttendanceView />
        <Lower>
          <Watermark aria-hidden="true">Page 3</Watermark>
          <RowHeads>{HEADS.map(([n, h]) => <RowHead key={n} $h={h}>{n}</RowHead>)}</RowHeads>
          <GuidelinesView />
          <StripView w={23} b={1} />
          <CodesView />
          <StripView w={18} b={2} />
          <SummaryView />
        </Lower>
      </Sheet>
      <SheetBar>
        <IconButton $w={24} aria-label="Previous sheet"><svg width="6" height="8" viewBox="0 0 6 8"><path d="M5 0v8L0 4z" fill="#c0c0c0" /></svg></IconButton>
        <IconButton $w={24} aria-label="Next sheet"><svg width="6" height="8" viewBox="0 0 6 8"><path d="M1 0v8l5-4z" fill="#c0c0c0" /></svg></IconButton>
        <SheetTab $w={27} $sep aria-label="All sheets" />
        <SheetTab $w={245}>school_form_2_shs_ver2018.2.1.1</SheetTab>
        <SheetTab $w={54} $on>MAY</SheetTab>
        <SheetTab $w={58} $sep>JUNE</SheetTab>
        <SheetTab $w={53} $sep>JULY</SheetTab>
        <IconButton $w={74} aria-label="New sheet"><svg width="18" height="18" viewBox="0 0 18 18" fill="none" stroke="#777"><circle cx="9" cy="9" r="8.300" /><path d="M9 4.500v9M4.500 9h9" strokeWidth="1.500" /></svg></IconButton>
        <Splitter><svg width="4" height="14" viewBox="0 0 4 14" fill="#9a9a9a"><path d="M0 1h2v2H0zM0 6h2v2H0zM0 11h2v2H0z" /></svg></Splitter>
        <Scroller><ScrollArrow $w={16} aria-label="Scroll left"><svg width="5" height="8" viewBox="0 0 5 8"><path d="M5 0v8L0 4z" fill="#222" /></svg></ScrollArrow></Scroller>
      </SheetBar>
      <Annotation width="1280" height="826" viewBox="0 0 1280 826" aria-hidden="true">
        <path d="M102 170Q103 165 108 163L148 153Q155 151 156 158 156 162 153 164L146 168 324 215 1199 442Q1204 445 1203 450 1201 455 1195 454L324 235 142 188 146 199Q146 206 140 207 136 207 132 202Z" />
      </Annotation>
    </Page>
  );
}
